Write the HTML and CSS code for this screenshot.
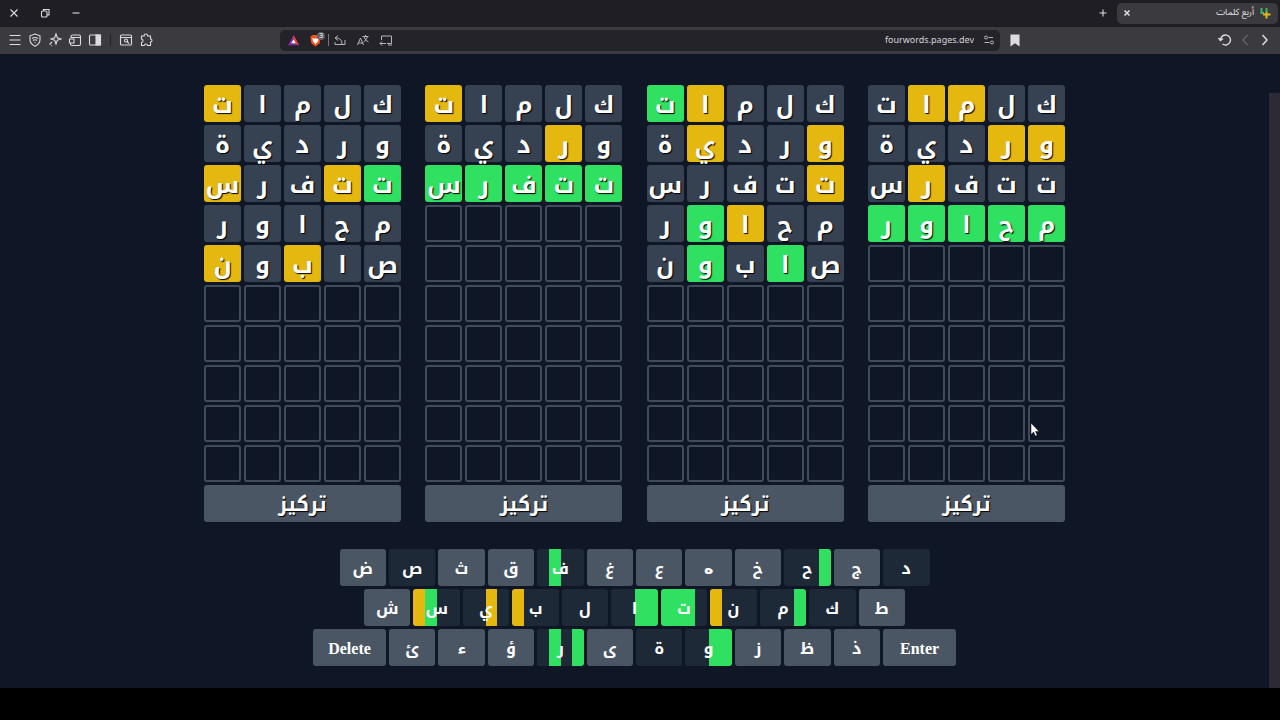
FILE: index.html
```html
<!DOCTYPE html>
<html lang="ar">
<head>
  <meta charset="utf-8">
  <title>أربع كلمات</title>
  <link rel="stylesheet" href="styles.css">
</head>
<body>
  <div class="titlebar">
    <button class="icon-button" aria-label="Close window"><svg viewBox="0 0 16 16"><path d="M4.500 4.500l7 7M11.500 4.500l-7 7"/></svg></button>
    <button class="icon-button" aria-label="Restore window"><svg viewBox="0 0 16 16"><rect x="4.500" y="6" width="5.500" height="6" rx="1"/><path d="M6.500 6V4.500h5.500V10h-2"/></svg></button>
    <button class="icon-button" aria-label="Minimize window"><svg viewBox="0 0 16 16"><path d="M4.500 8h7"/></svg></button>
    <span class="spacer"></span>
    <button class="icon-button" aria-label="New tab"><svg viewBox="0 0 16 16"><path d="M8 4.500v7M4.500 8h7"/></svg></button>
    <div class="tab">
      <button class="icon-button" aria-label="Close tab"><svg viewBox="0 0 16 16"><path d="M5.500 5.500l5 5M10.500 5.500l-5 5" stroke-width="1.600"/></svg></button>
      <span class="tab-title" dir="rtl">أربع كلمات</span>
      <svg class="favicon" viewBox="0 0 12 12"><path class="fav-green" d="M2.500 1v6M7.500 1v4M2 6h3"/><path class="fav-yellow" d="M4 7.500h7.500M7.500 5v6.500"/></svg>
    </div>
  </div>

  <div class="toolbar">
    <div class="tools">
      <button class="icon-button" aria-label="Menu"><svg viewBox="0 0 16 16"><path d="M2.500 3.500h11M2.500 8h11M2.500 12.500h11"/></svg></button>
      <button class="icon-button" aria-label="VPN"><svg viewBox="0 0 16 16"><path d="M8 2l5 1.800v4c0 3-2 5-5 6.500-3-1.500-5-3.500-5-6.500v-4z"/><path d="M5 6.500q3-2 6 0M6 8.500q2-1.400 4 0M7.500 10.500h1"/></svg></button>
      <button class="icon-button" aria-label="Leo"><svg viewBox="0 0 16 16"><path d="M9 2l1.300 3.700L14 7l-3.700 1.300L9 12 7.700 8.300 4 7l3.700-1.300zM5 10l-2.500 2.500M4 13.500h.8"/></svg></button>
      <button class="icon-button" aria-label="Wallet"><svg viewBox="0 0 16 16"><path d="M4 6V4.500Q4 3 6 3h6q1.500 0 1.500 1.500V12q0 1.500-1.500 1.500H5Q3.500 13.500 3.500 12v-1M4 5.500h9.500M2.500 7H7v4H2.500z"/></svg></button>
      <button class="icon-button" aria-label="Sidebar"><svg viewBox="0 0 16 16"><rect x="2.500" y="3" width="11" height="10" rx="1"/><path class="solid" d="M9 3h4.500v10H9z"/></svg></button>
      <span class="divider"></span>
      <button class="icon-button" aria-label="Search tabs"><svg viewBox="0 0 16 16"><rect x="2.500" y="3" width="11" height="10" rx="1"/><path d="M2.500 5.500h11M9 9.500l2 2"/><circle cx="8" cy="8.500" r="1.500"/></svg></button>
      <button class="icon-button" aria-label="Extensions"><svg viewBox="0 0 16 16"><path d="M3.500 4h2.700q-.3-2 1.600-2t1.700 2h3v3q1.500 0 1.500 1.500T12.500 10v3.500H9.500q-.2-1.500-1.600-1.500t-1.700 1.500H3.500v-3q1.500-.3 1.500-1.700T3.500 7z"/></svg></button>
    </div>

    <div class="address">
      <svg class="small-icon" viewBox="0 0 16 16"><path fill="#7b2ba8" d="M8 2L2 13h12z"/><path fill="#f0452c" d="M8 2l6 11-6-3z"/><path fill="#fff" d="M8 7l-2.500 4h5z"/></svg>
      <span class="shield">
        <svg class="small-icon" viewBox="0 0 16 16"><path fill="#f4511e" d="M5 2h6l2.500 2-1 7L8 14.500 3.500 11l-1-7z"/><path fill="#fff" d="M4.500 5l2 1L8 5.500 9.500 6l2-1-1 4L8 12 5.500 9z"/></svg>
        <span class="badge">3</span>
      </span>
      <span class="bar"></span>
      <button class="icon-button" aria-label="Share"><svg viewBox="0 0 16 16"><path d="M6 3.500L3 6l3 2.500M3.500 6Q10 5.500 10 12.500M3 10v2.500h10V8"/></svg></button>
      <button class="icon-button" aria-label="Translate"><svg viewBox="0 0 16 16"><path d="M2.500 13L5.500 6l3 7M3.500 11h4M7.500 4.500h6M10.500 3v1.500M8.500 10q3-2 4-5.500M9 5q1.500 4 4.500 5"/></svg></button>
      <button class="icon-button" aria-label="Cast"><svg viewBox="0 0 16 16"><path d="M3.500 8V4h10v7.500H9M2 11.500h6M4 9.500l-2 2 2 2M10 13h4"/></svg></button>
      <input class="url" type="text" value="fourwords.pages.dev" aria-label="Address">
      <button class="icon-button" aria-label="Site settings"><svg viewBox="0 0 16 16"><circle cx="5" cy="5.500" r="1.500"/><circle cx="11" cy="10.500" r="1.500"/><path d="M7.500 5.500H12M3.500 10.500h5"/></svg></button>
    </div>

    <div class="nav">
      <button class="icon-button" aria-label="Bookmark"><svg viewBox="0 0 16 16"><path class="solid" d="M4 3h8v10.500L8 10.500l-4 3z"/></svg></button>
      <span class="spacer"></span>
      <button class="icon-button" aria-label="Reload"><svg viewBox="0 0 16 16"><path d="M3.500 8a5 5 0 1 1 2 4M1.500 6L3.500 8.500 6 6.500" stroke-width="1.400"/></svg></button>
      <button class="icon-button dim" aria-label="Forward"><svg viewBox="0 0 16 16"><path d="M10.500 3L6 8l4.500 5"/></svg></button>
      <button class="icon-button" aria-label="Back"><svg viewBox="0 0 16 16"><path d="M5.500 3L10 8l-4.500 5" stroke-width="1.500"/></svg></button>
    </div>
  </div>

  <div class="page">
    <main class="game">
      <div class="boards" id="boards"></div>
      <div class="keyboard" id="keyboard"></div>
    </main>
    <div class="scrollbar"><div class="thumb"></div></div>
    <svg class="cursor" viewBox="0 0 10 15"><path d="M1 1v11.500l2.600-2.400L5.300 14l1.900-.8-1.700-3.800H9z"/></svg>
  </div>
  <div class="bottom-strip"></div>

  <script src="game.js"></script>
</body>
</html>
```
FILE: styles.css
```css
* {
  box-sizing: border-box;
}

body {
  margin: 0;
  min-height: 100vh;
  display: flex;
  flex-direction: column;
  background-color: #0f1626;
  font-family: "Noto Sans", sans-serif;
}

button {
  border: none;
  padding: 0;
  cursor: pointer;
}

svg {
  display: block;
}

/* Browser chrome */
.titlebar {
  display: flex;
  align-items: center;
  height: 27px;
  padding: 0 2px 1px 6px;
  background-color: #1f1e25;
}

.titlebar > .icon-button {
  margin-right: 15px;
}

.icon-button {
  flex: none;
  width: 16px;
  height: 16px;
  background: none;
  color: #dcdce0;
}

.icon-button svg {
  width: 16px;
  height: 16px;
  fill: none;
  stroke: currentColor;
  stroke-width: 1.1;
}

.icon-button .solid {
  fill: currentColor;
}

.icon-button.dim {
  color: #77767c;
}

.spacer {
  flex: 1;
}

.titlebar > .spacer + .icon-button {
  margin-right: 6px;
}

.tab {
  display: flex;
  align-items: center;
  width: 161px;
  height: 21px;
  padding: 0 7px 0 2px;
  border-radius: 5px;
  background-color: #3b3a3f;
}

.tab-title {
  flex: 1;
  font-family: "Noto Sans Arabic", "DejaVu Sans", sans-serif;
  font-size: 9px;
  line-height: 20px;
  color: #e4e4e7;
}

.favicon {
  width: 12px;
  height: 12px;
  margin-left: 5px;
  fill: none;
  stroke-width: 2;
}

.fav-green {
  stroke: #3fb56b;
}

.fav-yellow {
  stroke: #e5b91a;
}

.toolbar {
  display: flex;
  align-items: center;
  height: 27px;
  padding: 0 7px 1px 7px;
  background-color: #3b3a3f;
}

.tools {
  display: flex;
  align-items: center;
  gap: 4px;
  width: 273px;
}

.divider {
  width: 1px;
  height: 12px;
  margin: 0 3px;
  background-color: #222127;
}

.address {
  display: flex;
  align-items: center;
  flex: 1;
  height: 21px;
  padding: 0 3px 0 6px;
  border-radius: 5px;
  background-color: #242329;
}

.address .icon-button {
  margin-left: 7px;
  color: #b5b4ba;
}

.address .icon-button svg {
  stroke-width: 1;
}

.small-icon {
  width: 15px;
  height: 15px;
}

.shield {
  position: relative;
  margin: 0 3px 0 7px;
}

.badge {
  position: absolute;
  top: -1px;
  right: -2px;
  width: 8px;
  border-radius: 4px;
  background-color: #5d6068;
  font-size: 7px;
  line-height: 8px;
  text-align: center;
  color: #fff;
}

.bar {
  width: 1px;
  height: 12px;
  margin-left: 2px;
  background-color: #77767c;
}

.address .bar + .icon-button {
  margin-left: 3px;
}

.url {
  flex: 1;
  min-width: 0;
  padding: 0;
  border: none;
  background: none;
  font-family: "Noto Sans", sans-serif;
  font-size: 9px;
  line-height: 16px;
  text-align: right;
  color: #d4d4d8;
}

.nav {
  display: flex;
  align-items: center;
  gap: 4px;
  width: 273px;
  padding-left: 7px;
}

/* Game */
.page {
  position: relative;
  flex: 1;
  display: flex;
}

.game {
  flex: 1;
  display: flex;
  flex-direction: column;
  align-items: center;
  gap: 27px;
  padding-top: 31px;
}

.boards {
  display: flex;
  justify-content: space-between;
  width: 100%;
  max-width: 861px;
}

.board {
  display: grid;
  grid-template-columns: repeat(5, 37px);
  grid-auto-rows: 37px;
  gap: 3px;
  direction: rtl;
}

.tile {
  display: flex;
  align-items: center;
  justify-content: center;
  padding-top: 2px;
  border: 2px solid #414c5b;
  border-radius: 3px;
  color: #fff;
  font-family: "Noto Kufi Arabic", "Noto Sans Arabic", "DejaVu Sans", sans-serif;
  font-size: 24px;
  font-weight: bold;
  line-height: 32px;
  text-shadow: 1px 1px 1px #000;
}

.tile.absent {
  border-color: #364152;
  background-color: #364152;
}

.tile.present {
  border-color: #e5b80f;
  background-color: #e5b80f;
}

.tile.correct {
  border-color: #30e060;
  background-color: #30e060;
}

.focus-button {
  grid-column: 1 / -1;
  border-radius: 3px;
  background-color: #4b5665;
  color: #fff;
  font-family: "Noto Kufi Arabic", "Noto Sans Arabic", "DejaVu Sans", sans-serif;
  font-size: 20px;
  font-weight: bold;
  line-height: 32px;
  text-shadow: 1px 1px 1px #000;
}

.keyboard {
  display: flex;
  flex-direction: column;
  align-items: center;
  gap: 3px;
  width: 100%;
}

.key-row {
  display: flex;
  gap: 3px;
  width: 100%;
  max-width: 590px;
}

.key-row:nth-child(2) {
  max-width: 541px;
}

.key-row:nth-child(3) {
  max-width: 643px;
}

.key {
  flex: 1;
  height: 37px;
  padding-top: 2px;
  border-radius: 3px;
  background-color: #4b5665;
  color: #fff;
  font-family: "Noto Kufi Arabic", "Noto Sans Arabic", "DejaVu Sans", sans-serif;
  font-size: 16px;
  font-weight: bold;
  line-height: 32px;
}

.key.used {
  background-color: #1e2938;
}

/* Kufi draws a lone heh with two loops */
.key.heh {
  font-family: "DejaVu Sans", sans-serif;
}

.key.wide {
  flex: 0 0 73px;
  font-family: "Liberation Serif", serif;
}

.scrollbar {
  width: 11px;
  padding-top: 39px;
  display: flex;
}

.thumb {
  flex: 1;
  background-color: #2b2a35;
}

.cursor {
  position: absolute;
  left: 1030px;
  top: 368px;
  width: 10px;
  height: 15px;
  fill: #fff;
  stroke: #111;
  stroke-width: 0.5;
}

.bottom-strip {
  height: 32px;
  background-color: #000;
}
```
FILE: game.js
```js
const ROWS = 10;
const guesses = ['كلمات', 'وردية', 'تتفرس', 'محاور', 'صابون'];

// one string per guess, in reading order: - absent, y present, g correct
const results = [
  ['----y', '-----', 'gy--y', '-----', '--y-y'],
  ['----y', '-y---', 'ggggg'],
  ['---yg', 'y--y-', 'y----', '--yg-', '-g-g-'],
  ['--yy-', 'yy---', '---y-', 'ggggg']
];

const classes = { '-': 'absent', y: 'present', g: 'correct' };
const colors = { '-': '#1e2938', y: '#e5b80f', g: '#30e060' };

const keyRows = [
  ['ض', 'ص', 'ث', 'ق', 'ف', 'غ', 'ع', 'ه', 'خ', 'ح', 'ج', 'د'],
  ['ش', 'س', 'ي', 'ب', 'ل', 'ا', 'ت', 'ن', 'م', 'ك', 'ط'],
  ['Delete', 'ئ', 'ء', 'ؤ', 'ر', 'ى', 'ة', 'و', 'ز', 'ظ', 'ذ', 'Enter']
];

// state of each key on the four boards, left to right
const keyStates = {
  'ص': '----', 'ف': '-g--', 'ح': '---g', 'د': '----',
  'س': 'yg--', 'ي': '--y-', 'ب': 'y---', 'ل': '----', 'ا': '--gg',
  'ت': 'ggg-', 'ن': 'y---', 'م': '---g', 'ك': '----',
  'ر': '-g-g', 'ة': '----', 'و': '--gg'
};

const boards = document.getElementById('boards');
const keyboard = document.getElementById('keyboard');

results.forEach(result => {
  const board = document.createElement('div');
  board.className = 'board';
  for (let row = 0; row < ROWS; row++) {
    for (let col = 0; col < 5; col++) {
      const tile = document.createElement('div');
      tile.className = 'tile';
      if (result[row]) {
        tile.textContent = guesses[row][col];
        tile.classList.add(classes[result[row][col]]);
      }
      board.appendChild(tile);
    }
  }
  const button = document.createElement('button');
  button.className = 'focus-button';
  button.textContent = 'تركيز';
  board.appendChild(button);
  boards.appendChild(board);
});

keyRows.forEach(keys => {
  const row = document.createElement('div');
  row.className = 'key-row';
  keys.forEach(letter => {
    const key = document.createElement('button');
    key.className = 'key';
    key.textContent = letter;
    if (letter.length > 1) key.classList.add('wide');
    if (letter === 'ه') key.classList.add('heh');
    const state = keyStates[letter];
    if (state) {
      key.classList.add('used');
      if (state !== '----') {
        const stops = state.split('').map((s, i) => `${colors[s]} ${i * 25}% ${(i + 1) * 25}%`);
        key.style.backgroundImage = `linear-gradient(to right, ${stops.join(', ')})`;
      }
    }
    row.appendChild(key);
  });
  keyboard.appendChild(row);
});
```
